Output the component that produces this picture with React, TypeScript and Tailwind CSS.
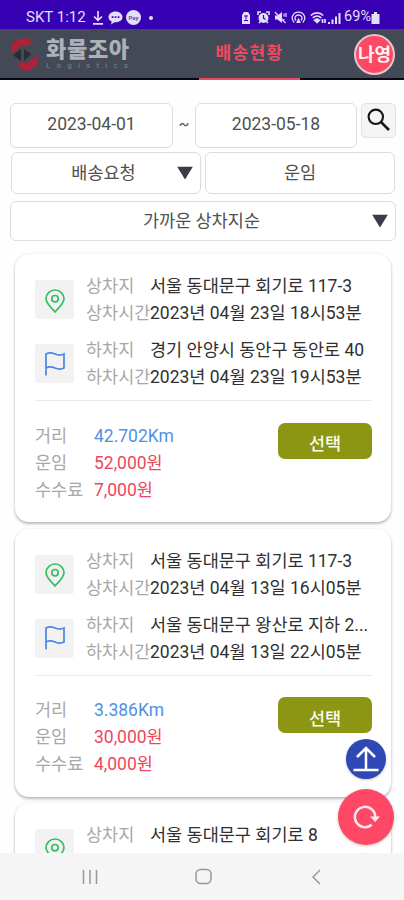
import React from 'react';
import { clsx } from 'clsx';

interface Delivery {
  id: number;
  loadingPlace: string;
  loadingTime?: string;
  details?: {
    unloadingPlace: string;
    unloadingTime: string;
    distance: string;
    fare: string;
    fee: string;
  };
}

const deliveries: Delivery[] = [
  {
    id: 1,
    loadingPlace: '서울 동대문구 회기로 117-3',
    loadingTime: '2023년 04월 23일 18시53분',
    details: {
      unloadingPlace: '경기 안양시 동안구 동안로 40',
      unloadingTime: '2023년 04월 23일 19시53분',
      distance: '42.702Km',
      fare: '52,000원',
      fee: '7,000원',
    },
  },
  {
    id: 2,
    loadingPlace: '서울 동대문구 회기로 117-3',
    loadingTime: '2023년 04월 13일 16시05분',
    details: {
      unloadingPlace: '서울 동대문구 왕산로 지하 2...',
      unloadingTime: '2023년 04월 13일 22시05분',
      distance: '3.386Km',
      fare: '30,000원',
      fee: '4,000원',
    },
  },
  {
    id: 3,
    loadingPlace: '서울 동대문구 회기로 8',
  },
];

const StatusBar = () => (
  <div className="flex h-[29px] shrink-0 items-center bg-[#3700b3] pt-1.5 pl-[26px] text-[#e4defa]">
    <span className="w-[66px] text-[15px] leading-none whitespace-nowrap">SKT 1:12</span>
    <svg className="h-3.5 w-3" viewBox="0 0 12 14" fill="none" stroke="currentColor" strokeWidth="1.7">
      <path d="M6 0v9M2 5.5 6 9.3l4-3.8M1 12.8h10" />
    </svg>
    <svg className="ml-1 h-3.5 w-[15px]" viewBox="0 0 15 14">
      <path d="M7.5.5C3.500.5.5 3 .5 6c0 2 1.200 3.600 3.200 4.600L3 13.500l3.500-2.300c5 .4 8-2.200 8-5.200 0-3-3-5.500-7-5.500Z" fill="currentColor" />
      <path d="M3.700 5.200h1.700v1.700H3.700zM6.700 5.200h1.700v1.700H6.700zM9.700 5.200h1.700v1.700H9.700z" fill="#3700b3" />
    </svg>
    <span className="ml-[3px] flex size-[15px] items-center justify-center rounded-full bg-current">
      <span className="text-[6px] font-bold text-[#674da8]">Pay</span>
    </span>
    <span className="ml-2 size-1 rounded-full bg-current" />
    <div className="ml-auto flex items-center pr-[24px]">
      <svg className="h-3.5 w-[10px]" viewBox="0 0 10 14">
        <path d="M1 4 3 1h4l2 3v9H1z" fill="currentColor" />
        <path d="M3 5h4M5 4.500v4M3 9.500h4" stroke="#3700b3" fill="none" />
      </svg>
      <svg className="ml-1.5 size-[13px]" viewBox="0 0 13 13">
        <circle cx="6.500" cy="7" r="5" fill="currentColor" />
        <path d="M1 4V1h3M9 1h3v3M2 12l1.500-1.500M11 12l-1.500-1.500" stroke="currentColor" strokeWidth="1.600" fill="none" />
        <path d="M6.500 4v3.200l2 1.300" stroke="#3700b3" strokeWidth="1.200" fill="none" />
      </svg>
      <svg className="ml-[4px] size-[13px]" viewBox="0 0 13 13">
        <path d="M1 4.500h2.500L8 1v11L3.500 8.500H1z" fill="currentColor" />
        <path d="M1 1l10.500 11M10 2.500v3M12 2v4M10 8v1" stroke="currentColor" strokeWidth="1.200" />
      </svg>
      <svg className="ml-[4px] h-[13px] w-[15px]" viewBox="0 0 15 13" fill="none" stroke="currentColor" strokeWidth="1.300">
        <path d="M3.200 11.500C-1 7 2 1.200 7.500 1.200S16 7 11.800 11.500M5 9.500c-2.500-3 0-5.500 2.500-5.500s5 2.500 2.500 5.500" />
        <path d="M7.500 6.500 9.800 12H5.200z" fill="currentColor" stroke="none" />
      </svg>
      <svg className="ml-[4px] h-[13px] w-4" viewBox="0 0 16 13" fill="none" stroke="currentColor" strokeWidth="1.700">
        <path d="M.8 4.500c3.500-3.500 9-3.500 12.400 0M2.800 6.800c2.500-2.300 6-2.300 8.400 0M4.800 9c1.500-1.300 3-1.300 4.400 0" />
        <path d="m7 11.500-2-2h4zM12.500 8v4M15 8v4" />
      </svg>
      <svg className="ml-[1px] h-3 w-[14px]" viewBox="0 0 14 12" fill="currentColor">
        <path d="M1 10h2v2H1zM4.500 7.500h2V12h-2zM8 4.500h2V12H8zM11.500 1h2v11h-2z" />
      </svg>
      <span className="ml-[3px] text-[14.5px] leading-none">69%</span>
      <svg className="h-[12px] w-[9px]" viewBox="0 0 9 12" fill="currentColor">
        <path d="M3 0h3v2h2.500v10h-8V2H3z" />
      </svg>
    </div>
  </div>
);

const Header = () => (
  <header className="flex h-[51px] shrink-0 bg-[#434955]">
    <div className="flex flex-1 border-b-2 border-[#080713] pl-3">
      <svg className="mt-[9px] h-[34px] w-[26px]" viewBox="0 0 26 34">
        <path d="M0 12V6L6 1l10-1 5 5-6 3H9L4 13l-4 2z" fill="#ad2238" />
        <path d="M25 21v6l-9 6-9-3-1-5 5-1 5 1 5-5 4-2z" fill="#ad2238" />
        <path d="m1 17 8-6v12zM19 16l-7-5v12z" fill="#292d34" />
      </svg>
      <div className="ml-2 flex flex-col pt-2">
        <span className="text-[22px] leading-[25px] font-black tracking-[0.7px] whitespace-nowrap text-[#adb1b7]">화물조아</span>
        <span className="text-[8px] leading-[8px] tracking-[6.2px] text-[#7a818c]">Logistics</span>
      </div>
    </div>
    <div className="flex w-[101px] items-center justify-center border-b-2 border-[#e94b62] text-[17px] font-bold tracking-[1.3px] text-[#ee4b62]">
      배송현황
    </div>
    <div className="flex w-[104px] justify-end border-b-2 border-[#080713] pt-[5px] pr-[9px]">
      <div className="flex size-[41px] items-center justify-center rounded-full border-2 border-[#dfc9cf] bg-[#ff4964] text-[18px] leading-none font-bold text-[#fff0f3]">
        나영
      </div>
    </div>
  </header>
);

const Triangle = () => (
  <svg className="absolute top-1/2 right-[7px] h-[13px] w-4 -translate-y-1/2" viewBox="0 0 16 13">
    <path d="M0 0h16L8 13z" fill="#3b3b4b" />
  </svg>
);

interface FieldProps {
  className: string;
  select?: boolean;
  children: React.ReactNode;
}

const Field: React.FC<FieldProps> = ({ className, select, children }) => (
  <button
    className={clsx(
      'relative flex items-center justify-center rounded-[6px] border-[1.5px] border-[#dcdcdf] bg-white text-[17.5px] text-[#505050]',
      className
    )}
  >
    {children}
    {select && <Triangle />}
  </button>
);

const Filters = () => (
  <section className="flex shrink-0 flex-col pt-[23px] pr-2 pl-[10px]">
    <div className="flex">
      <Field className="h-[45px] w-[163px] pb-[3px]">2023-04-01</Field>
      <span className="w-[22px] pt-[10px] text-center text-[16px] text-[#555]">~</span>
      <Field className="h-[45px] w-[162px] pb-[3px]">2023-05-18</Field>
      <button className="ml-1 flex size-[35px] items-center justify-center rounded-[5px] border-[1.5px] border-[#e2e2e4] bg-[#f5f5f6]">
        <svg className="size-6 -translate-y-px" viewBox="0 0 24 24" fill="none" stroke="#151515">
          <circle cx="8.800" cy="8.800" r="7.200" strokeWidth="2.100" />
          <path d="m13.800 13.800 8.200 8.200" strokeWidth="2.600" />
        </svg>
      </button>
    </div>
    <div className="mt-1 flex gap-1 pl-px">
      <Field select className="h-[42px] w-[190px] pr-[5px]">배송요청</Field>
      <Field className="h-[42px] w-[190px]">운임</Field>
    </div>
    <Field select className="mt-[7px] h-[40px] w-[386px] pr-[3px]">가까운 상차지순</Field>
  </section>
);

const PinIcon = () => (
  <svg className="h-6 w-5 translate-y-px" viewBox="0 0 20 24" fill="none" stroke="#38bd63" strokeWidth="1.700">
    <path d="M10 23C6 18.500 1 14 1 9.700a9 8.700 0 0 1 18 0C19 14 14 18.500 10 23Z" />
    <circle cx="10" cy="9.700" r="3.200" />
  </svg>
);

const FlagIcon = () => (
  <svg className="h-6 w-5" viewBox="0 0 20 24" fill="none" stroke="#4a86e4" strokeWidth="1.700">
    <path d="M1 23.500V2c3-1.500 6-1.300 9 0s6 1.500 9 0v14c-3 1.500-6 1.300-9 0s-6-1.500-9 0" />
  </svg>
);

interface StopProps {
  icon: React.ReactNode;
  label: string;
  place: string;
  time?: string;
}

const Stop: React.FC<StopProps> = ({ icon, label, place, time }) => (
  <div className="flex h-16">
    <div className="mt-[7px] flex size-[39px] shrink-0 items-center justify-center rounded-[3px] bg-[#f2f2f2]">
      {icon}
    </div>
    <div className="ml-3 grid grid-cols-[64px_1fr] content-start text-[17.500px] leading-[27px] whitespace-nowrap">
      <span className="text-[#a8a8a8]">{label}지</span>
      <span className="text-[#303030]">{place}</span>
      {time && (
        <>
          <span className="text-[#a8a8a8]">{label}시간</span>
          <span className="text-[#303030]">{time}</span>
        </>
      )}
    </div>
  </div>
);

const DeliveryCard: React.FC<{ item: Delivery }> = ({ item }) => (
  <article className="h-[268px] shrink-0 rounded-[14px] bg-white pt-[19px] pr-[19px] pl-5 shadow-[0_2px_3px_rgba(0,0,0,0.25),0_0_3px_rgba(0,0,0,0.08)]">
    <Stop icon={<PinIcon />} label="상차" place={item.loadingPlace} time={item.loadingTime} />
    {item.details && (
      <>
        <Stop icon={<FlagIcon />} label="하차" place={item.details.unloadingPlace} time={item.details.unloadingTime} />
        <div className="-mt-px h-px bg-[#e9e9e9]" />
        <div className="flex justify-between pt-[21.500px]">
          <div className="grid grid-cols-[59px_1fr] content-start text-[17.500px] leading-[27px] whitespace-nowrap">
            <span className="text-[#a8a8a8]">거리</span>
            <span className="text-[#5290e4]">{item.details.distance}</span>
            <span className="text-[#a8a8a8]">운임</span>
            <span className="text-[#ee465e]">{item.details.fare}</span>
            <span className="text-[#a8a8a8]">수수료</span>
            <span className="text-[#ee465e]">{item.details.fee}</span>
          </div>
          <button className="flex h-9 w-[94px] items-center justify-center rounded-[7px] bg-[#8c9613] pt-[9px] text-[17.500px] leading-none font-medium text-[#fafbe9]">
            선택
          </button>
        </div>
      </>
    )}
  </article>
);

const NavBar = () => (
  <nav className="flex h-[47px] shrink-0 items-center bg-[#f5f5f5] text-[#999]">
    <svg className="ml-[82px] h-4 w-4" viewBox="0 0 16 16" stroke="currentColor" strokeWidth="1.500">
      <path d="M1.500 1v14M8 1v14M14.500 1v14" />
    </svg>
    <svg className="ml-[97px] h-[17px] w-[17px]" viewBox="0 0 17 17" fill="none" stroke="currentColor" strokeWidth="1.500">
      <rect x="1" y="1.500" width="15" height="14" rx="4.500" />
    </svg>
    <svg className="ml-[100px] h-4 w-[9px]" viewBox="0 0 9 16" fill="none" stroke="currentColor" strokeWidth="1.500">
      <path d="M8 1 1 8l7 7" />
    </svg>
  </nav>
);

const FloatingButtons = () => (
  <>
    <button className="absolute top-[739px] left-[346px] flex size-10 items-center justify-center rounded-full bg-[#3048b5] shadow-[0_1px_2px_rgba(0,0,0,0.25)]">
      <svg className="h-7 w-7" viewBox="0 0 28 28" fill="none" stroke="#fff" strokeWidth="2.500">
        <path d="M14 24V3M5 12l9-9 9 9M1.500 25h25" />
      </svg>
    </button>
    <button className="absolute top-[789px] left-[338px] flex size-[56px] items-center justify-center rounded-full bg-[#ff4766] shadow-[0_1px_3px_rgba(0,0,0,0.25)]">
      <svg className="h-6 w-[27px]" viewBox="0 0 27 24" fill="none" stroke="#ffe9ee" strokeWidth="2.500">
        <path d="M18.700 19.800a10.200 10.200 0 1 1 3.600-7.800" />
        <path d="M17 11.500h10L22.300 17z" fill="#ffe9ee" stroke="none" />
      </svg>
    </button>
  </>
);

export default function App() {
  return (
    <div className="relative flex h-[900px] w-[404px] flex-col overflow-hidden bg-[#fefefe] font-[Roboto,'Noto_Sans_CJK_KR',sans-serif]">
      <StatusBar />
      <Header />
      <Filters />
      <main className="flex min-h-0 flex-1 flex-col gap-[6.500px] overflow-hidden pt-[13px] pr-[13px] pl-[15px]">
        {deliveries.map((item) => (
          <DeliveryCard key={item.id} item={item} />
        ))}
      </main>
      <NavBar />
      <FloatingButtons />
    </div>
  );
}
